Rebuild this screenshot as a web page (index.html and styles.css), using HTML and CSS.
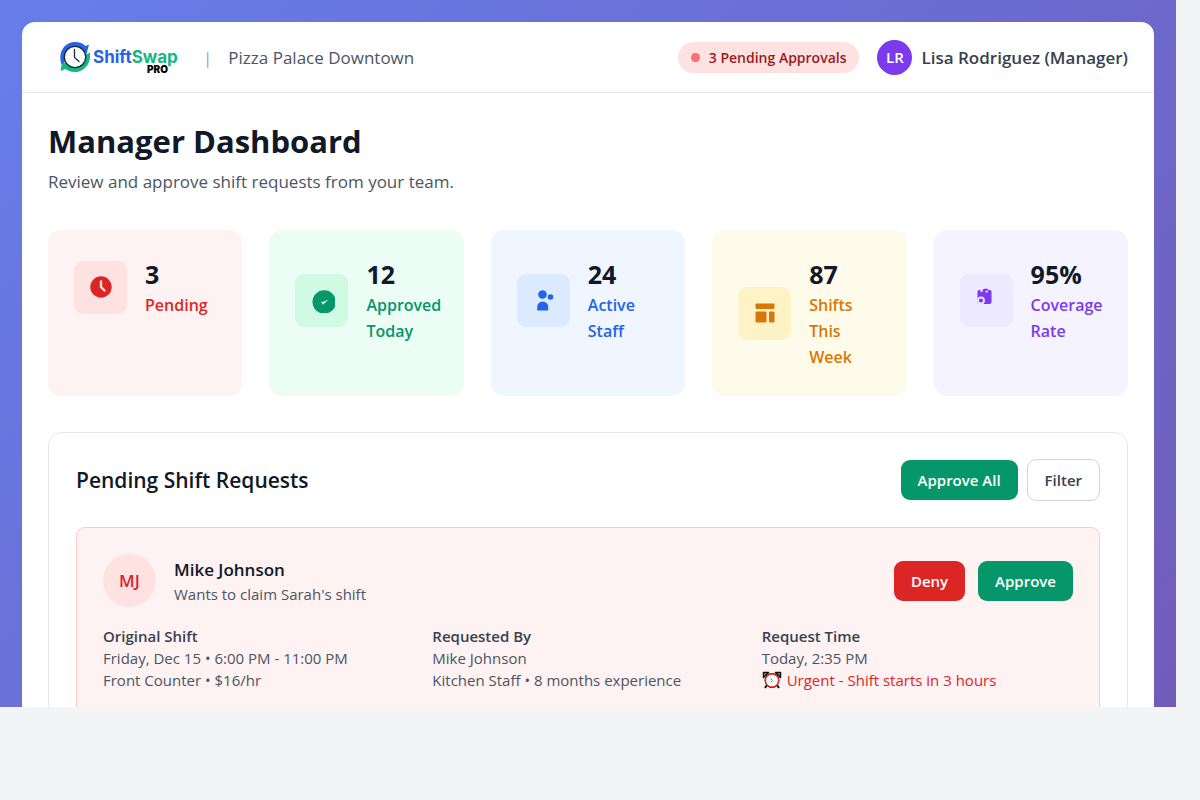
FILE: index.html
```html
<!DOCTYPE html>
<html lang="en">
<head>
    <meta charset="UTF-8">
    <meta name="viewport" content="width=device-width, initial-scale=1.0">
    <title>ShiftSwap Pro - Manager Dashboard</title>
    <link rel="stylesheet" href="styles.css">
</head>
<body>
    <div class="demo-frame">
        <div class="app">
            <header class="header">
                <div class="header-left">
                    <svg class="logo" viewBox="0 -1 128 36" role="img" aria-label="ShiftSwap Pro">
                        <path fill="#10b981" d="M27 14.500 L30.800 12.500 C32.500 24 25 32 16 32 C12 32 9 31 6.500 29 L1.500 31 L3 22.500 L9 23 Z"/>
                        <path fill="#2563eb" d="M2.500 24.500 C-1.500 13 5 2 16 2 C20.500 2 24 3.500 26.500 6 L30 4.500 L27.500 14 L20 10 L7 21 Z"/>
                        <circle cx="16" cy="17" r="10.700" fill="#fff" stroke="#1f2937" stroke-width="1.300"/>
                        <path d="M15.500 9.500 V17.500 L20 21.500" fill="none" stroke="#1f2937" stroke-width="1.300" stroke-linecap="round"/>
                        <text class="logo-text" x="34" y="23"><tspan fill="#2563eb">Shift</tspan><tspan fill="#10b981">Swap</tspan></text>
                        <text class="logo-pro" x="88" y="33">PRO</text>
                    </svg>
                    <span class="divider">|</span>
                    <span class="location">Pizza Palace Downtown</span>
                </div>
                <div class="header-right">
                    <div class="alert-pill"><span class="dot"></span>3 Pending Approvals</div>
                    <div class="user">
                        <div class="user-avatar">LR</div>
                        <span>Lisa Rodriguez (Manager)</span>
                    </div>
                </div>
            </header>

            <main class="content">
                <h1>Manager Dashboard</h1>
                <p class="subtitle">Review and approve shift requests from your team.</p>

                <section class="stats">
                    <div class="stat red">
                        <div class="stat-icon">
                            <svg viewBox="0 0 26 26">
                                <circle cx="13" cy="13" r="10.700" fill="currentColor"/>
                                <path d="M13 7.500 V13 L16.500 16.500" fill="none" stroke="#fee2e2" stroke-width="2.400" stroke-linecap="round" stroke-linejoin="round"/>
                            </svg>
                        </div>
                        <div>
                            <div class="stat-number">3</div>
                            <div class="stat-label">Pending</div>
                        </div>
                    </div>
                    <div class="stat green">
                        <div class="stat-icon">
                            <svg viewBox="0 0 26 26">
                                <circle cx="15.200" cy="15" r="11.700" fill="currentColor"/>
                                <path fill="#d1fae5" d="M11.800 14.500 L14 15 L19.500 12.500 L14 17.800 Z"/>
                            </svg>
                        </div>
                        <div>
                            <div class="stat-number">12</div>
                            <div class="stat-label">Approved Today</div>
                        </div>
                    </div>
                    <div class="stat blue">
                        <div class="stat-icon">
                            <svg viewBox="0 0 26 26" fill="currentColor">
                                <circle cx="12.500" cy="7.500" r="4.300"/>
                                <circle cx="20.500" cy="10" r="2.800"/>
                                <path d="M7.200 23.500 V20 A5.500 5.500 0 0 1 18.200 20 V23.500 Z"/>
                            </svg>
                        </div>
                        <div>
                            <div class="stat-number">24</div>
                            <div class="stat-label">Active Staff</div>
                        </div>
                    </div>
                    <div class="stat yellow">
                        <div class="stat-icon">
                            <svg viewBox="0 0 26 26" fill="currentColor">
                                <rect x="3.500" y="3.500" width="19" height="5.500" rx="1"/>
                                <rect x="3.500" y="11.500" width="11" height="11" rx="1"/>
                                <rect x="17" y="11.500" width="5.500" height="11" rx="1"/>
                            </svg>
                        </div>
                        <div>
                            <div class="stat-number">87</div>
                            <div class="stat-label">Shifts This Week</div>
                        </div>
                    </div>
                    <div class="stat purple">
                        <div class="stat-icon">
                            <svg viewBox="0 0 26 26">
                                <path fill="currentColor" d="M4.500 4.500 Q4.500 3 6 3 H7.500 V5 H9.500 V3 Q10.500 1.500 13 1.500 Q15 1.500 15.500 3 H17 Q18.500 3 18.500 4.500 V15 Q18.500 17 16.500 17 H6 Q4.500 17 4.500 15 Z"/>
                                <circle cx="8" cy="13.500" r="3" fill="currentColor" stroke="#ede9fe" stroke-width="1.800"/>
                                <path d="M12.500 5 L15 4" stroke="#ede9fe" stroke-width="1.500"/>
                            </svg>
                        </div>
                        <div>
                            <div class="stat-number">95%</div>
                            <div class="stat-label">Coverage Rate</div>
                        </div>
                    </div>
                </section>

                <section class="panel">
                    <div class="panel-header">
                        <h2>Pending Shift Requests</h2>
                        <div class="panel-actions">
                            <button class="btn btn-approve">Approve All</button>
                            <button class="btn btn-outline">Filter</button>
                        </div>
                    </div>

                    <article class="request">
                        <div class="request-header">
                            <div class="person">
                                <div class="person-avatar">MJ</div>
                                <div>
                                    <h3>Mike Johnson</h3>
                                    <p>Wants to claim Sarah's shift</p>
                                </div>
                            </div>
                            <div class="request-actions">
                                <button class="btn btn-deny">Deny</button>
                                <button class="btn btn-approve">Approve</button>
                            </div>
                        </div>
                        <div class="details">
                            <div>
                                <h4>Original Shift</h4>
                                <p>Friday, Dec 15 • 6:00 PM - 11:00 PM</p>
                                <p>Front Counter • $16/hr</p>
                            </div>
                            <div>
                                <h4>Requested By</h4>
                                <p>Mike Johnson</p>
                                <p>Kitchen Staff • 8 months experience</p>
                            </div>
                            <div>
                                <h4>Request Time</h4>
                                <p>Today, 2:35 PM</p>
                                <p class="urgent">
                                    <svg viewBox="0 0 20 18">
                                        <path d="M5 14 L3 17 M15 14 L17 17" stroke="#111" stroke-width="2"/>
                                        <path d="M1.500 6.500 V1.500 H6.500 Z M18.500 6.500 V1.500 H13.500 Z" fill="#9ca3af" stroke="#111" stroke-width="1.500" stroke-linejoin="round"/>
                                        <circle cx="10" cy="9.500" r="7.500" fill="#111"/>
                                        <circle cx="10" cy="9.500" r="6.500" fill="#fff" stroke="#e0412a" stroke-width="1.300"/>
                                        <path d="M8.500 7.500 L10.500 9.500 L8.500 11.500" fill="none" stroke="#555" stroke-width="0.800"/>
                                    </svg>
                                    Urgent - Shift starts in 3 hours
                                </p>
                            </div>
                        </div>
                    </article>
                </section>
            </main>
        </div>
    </div>
</body>
</html>
```
FILE: styles.css
```css
* {
    margin: 0;
    padding: 0;
    box-sizing: border-box;
}

body {
    background: #f3f4f6;
    color: #111827;
    font-family: 'Segoe UI', 'Open Sans', 'Noto Sans', sans-serif;
    font-size: 17px;
    overflow: hidden;
}

/* gradient frame, the app is cut off at its lower edge */
.demo-frame {
    height: calc(100vh - 93px);
    margin-right: 24px;
    padding: 22px;
    overflow: hidden;
    background: linear-gradient(135deg, #667eea 0%, #764ba2 100%) 0 0 / 100% 1600px;
}

.app {
    min-height: 100vh;
    background: #fff;
    border-radius: 13px;
}

.header {
    display: flex;
    justify-content: space-between;
    align-items: center;
    padding: 17px 26px;
    border-bottom: 1px solid #e5e7eb;
}

.header-left,
.header-right,
.user {
    display: flex;
    align-items: center;
}

.header-left {
    gap: 16px;
    padding-left: 11px;
}

.header-right {
    gap: 18px;
}

.logo {
    width: 128px;
    height: 36px;
    flex-shrink: 0;
}

.logo-text {
    font-family: Inter, sans-serif;
    font-size: 17px;
    font-weight: 700;
}

.logo-pro {
    font-family: Inter, sans-serif;
    font-size: 10px;
    font-weight: 900;
}

.divider {
    color: #9ca3af;
}

.location {
    color: #4b5563;
}

.alert-pill {
    display: flex;
    align-items: center;
    gap: 9px;
    padding: 4px 13px;
    border-radius: 20px;
    background: #fee2e2;
    color: #991b1b;
    font-size: 14px;
    font-weight: 600;
    line-height: 23px;
}

.dot {
    width: 9px;
    height: 9px;
    border-radius: 50%;
    background: #f87171;
}

.user {
    gap: 9px;
    color: #374151;
    font-weight: 600;
}

.user-avatar {
    display: flex;
    align-items: center;
    justify-content: center;
    width: 35px;
    height: 35px;
    border-radius: 50%;
    background: #7c3aed;
    color: #fff;
    font-size: 15px;
}

.content {
    padding: 26px;
}

h1 {
    font-size: 31px;
    font-weight: 700;
    line-height: 44px;
}

.subtitle {
    margin-top: 6px;
    color: #4b5563;
    line-height: 26px;
}

.stats {
    display: grid;
    grid-template-columns: repeat(5, 1fr);
    gap: 27px;
    margin: 35px 0 36px;
}

.stat {
    display: grid;
    grid-template-columns: 53px 1fr;
    gap: 18px;
    align-content: start;
    align-items: center;
    min-width: 0;
    padding: 26px;
    border-radius: 13px;
}

.stat-icon {
    display: flex;
    align-items: center;
    justify-content: center;
    height: 53px;
    border-radius: 9px;
}

.stat-icon svg {
    width: 26px;
    height: 26px;
}

.stat-number {
    color: #111827;
    font-size: 25px;
    font-weight: 700;
    line-height: 36px;
}

.stat-label {
    font-size: 16px;
    font-weight: 600;
    line-height: 26px;
}

.red { background: #fef2f2; color: #dc2626; }
.red .stat-icon { background: #fee2e2; }
.green { background: #ecfdf5; color: #059669; }
.green .stat-icon { background: #d1fae5; }
.blue { background: #eff6ff; color: #2563eb; }
.blue .stat-icon { background: #dbeafe; }
.yellow { background: #fffbeb; color: #d97706; }
.yellow .stat-icon { background: #fef3c7; }
.purple { background: #f5f3ff; color: #7c3aed; }
.purple .stat-icon { background: #ede9fe; }

.panel {
    padding: 26px 27px;
    border: 1px solid #e5e7eb;
    border-radius: 13px;
}

.panel-header,
.request-header {
    display: flex;
    justify-content: space-between;
    align-items: center;
}

.panel-header {
    margin-bottom: 26px;
}

h2 {
    font-size: 21px;
    font-weight: 600;
}

.panel-actions {
    display: flex;
    align-items: center;
    gap: 9px;
}

.request-actions {
    display: flex;
    gap: 13px;
}

.btn {
    padding: 9px 17px;
    border: none;
    border-radius: 9px;
    color: #fff;
    font-family: inherit;
    font-size: 15px;
    font-weight: 600;
    line-height: 22px;
    cursor: pointer;
}

.btn-approve {
    background: #059669;
}

.btn-deny {
    background: #dc2626;
}

.btn-outline {
    border: 1px solid #d1d5db;
    background: #fff;
    color: #374151;
}

.request {
    padding: 26px;
    border: 1px solid #fecaca;
    border-radius: 9px;
    background: #fef2f2;
}

.request-header {
    margin-bottom: 18px;
}

.person {
    display: flex;
    align-items: center;
    gap: 18px;
}

.person-avatar {
    display: flex;
    align-items: center;
    justify-content: center;
    width: 53px;
    height: 53px;
    border-radius: 50%;
    background: #fee2e2;
    color: #dc2626;
    font-weight: 600;
}

h3 {
    font-size: 17px;
    font-weight: 600;
    line-height: 26px;
}

.person p,
.details {
    color: #4b5563;
    font-size: 15px;
    line-height: 22px;
}

.details {
    display: grid;
    grid-template-columns: repeat(3, 1fr);
    gap: 18px;
}

h4 {
    color: #374151;
    font-size: 15px;
    font-weight: 600;
}

.details .urgent {
    display: flex;
    align-items: center;
    gap: 5px;
    color: #dc2626;
}

.urgent svg {
    width: 20px;
    height: 18px;
}
```
